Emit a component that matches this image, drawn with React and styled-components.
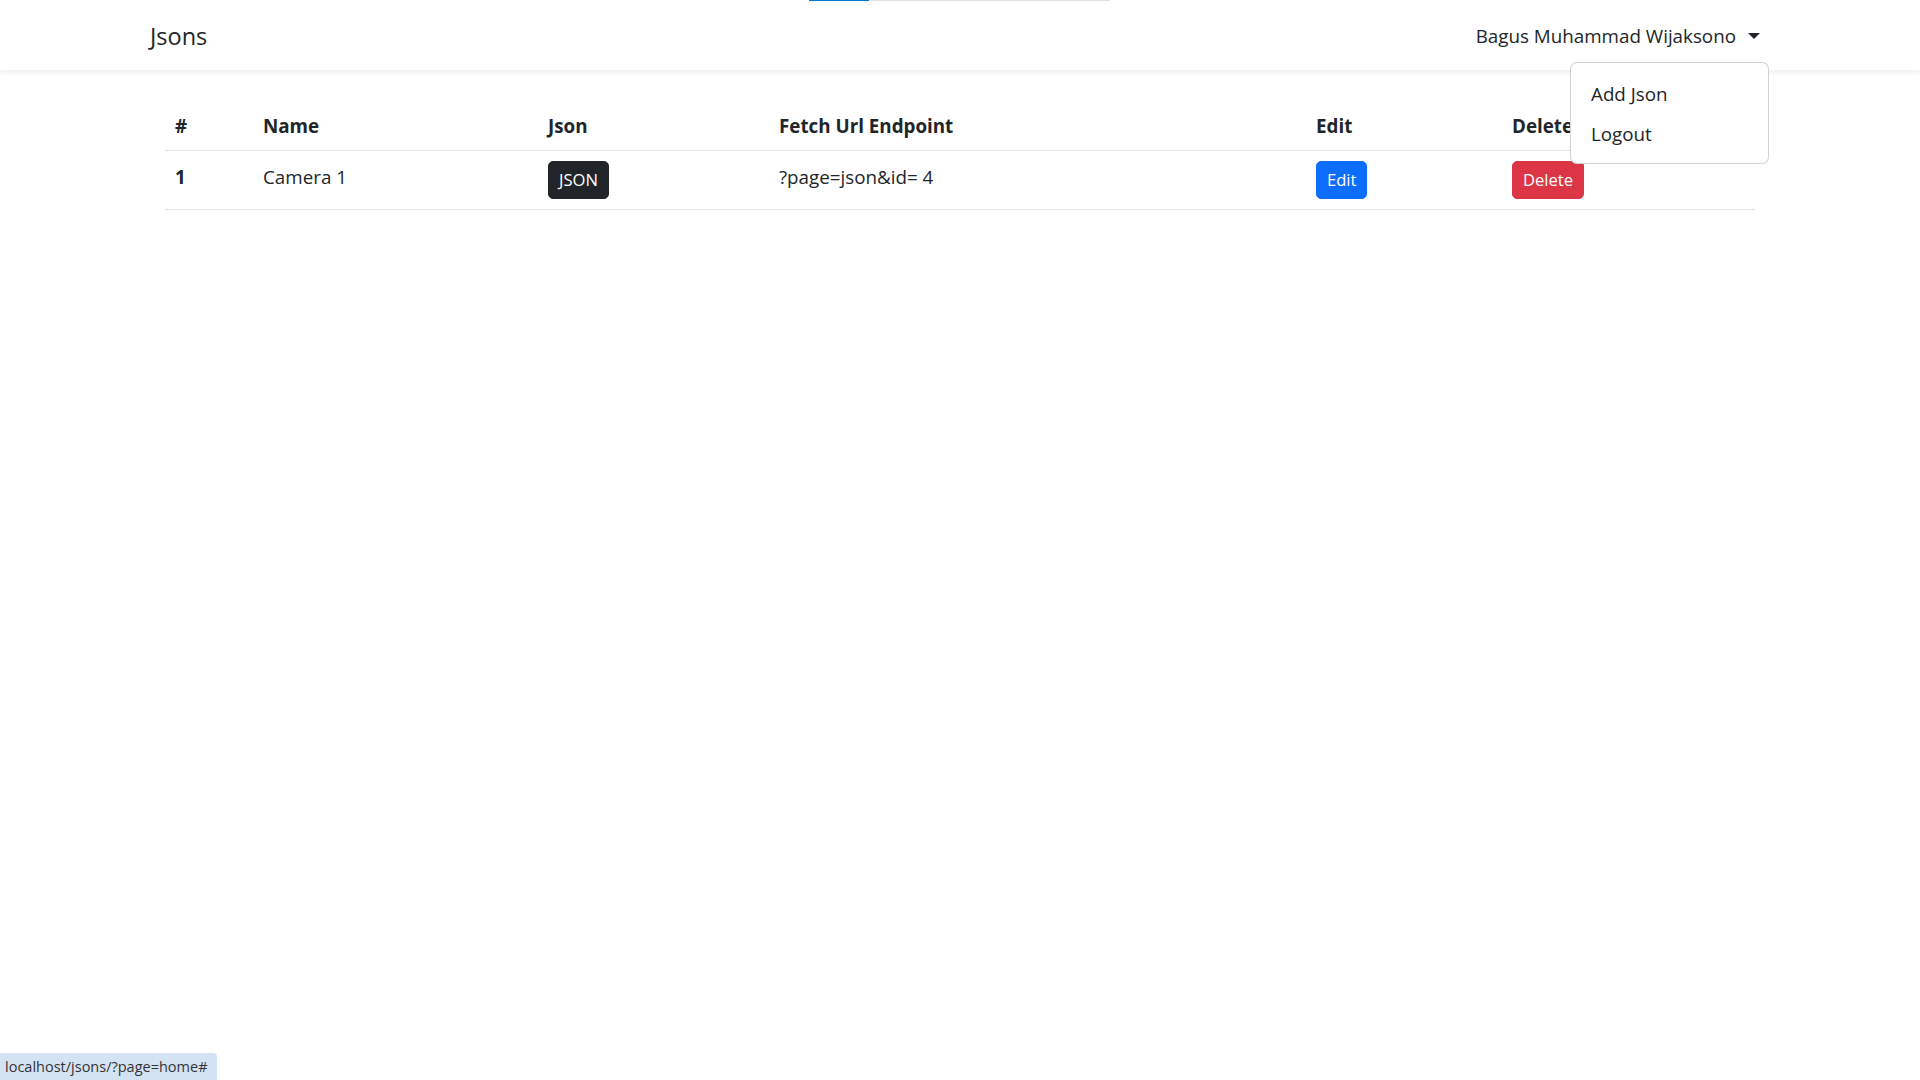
import React from "react";
import styled, { createGlobalStyle } from "styled-components";

const GlobalStyle = createGlobalStyle`
  html, body {
    margin: 0;
    padding: 0;
    background: #fff;
  }
  body {
    font-family: "Segoe UI", "Open Sans", "Noto Sans", sans-serif;
    font-size: 18.8px;
    line-height: 30px;
    color: #212529;
  }
  * {
    box-sizing: border-box;
  }
`;

// Navbar
const Navbar = styled.nav`
  height: 70px;
  padding: 10px 150px;
  display: flex;
  align-items: center;
  justify-content: space-between;
  background: #fff;
  box-shadow: 0 2px 6px rgba(0, 0, 0, 0.075);
  position: relative;
  z-index: 2;
`;

const Brand = styled.a`
  font-size: 23.5px;
  line-height: 37px;
  padding-top: 2px;
  color: #212529;
  text-decoration: none;
`;

const NavItem = styled.div`
  position: relative;
`;

const NavLink = styled.a`
  display: flex;
  align-items: center;
  padding: 11px 10px 9px;
  line-height: 30px;
  color: #212529;
  text-decoration: none;

  &::after {
    content: "";
    display: inline-block;
    margin-left: 12px;
    border-top: 6px solid #212529;
    border-left: 6px solid transparent;
    border-right: 6px solid transparent;
  }
`;

const Menu = styled.div`
  position: absolute;
  right: 1px;
  top: calc(100% + 2px);
  width: 199px;
  padding: 10px 0;
  background: #fff;
  border: 1px solid rgba(0, 0, 0, 0.175);
  border-radius: 7px;
`;

const MenuItem = styled.a`
  display: block;
  padding: 6px 20px 4px;
  line-height: 30px;
  color: #212529;
  text-decoration: none;
`;

// Table
const Main = styled.main`
  padding: 30px 165px 0;
`;

const Table = styled.table`
  width: 100%;
  border-collapse: collapse;
  table-layout: fixed;
`;

const Th = styled.th`
  width: ${(p) => p.$w}px;
  text-align: left;
  font-weight: 700;
  padding: 11px 10px 9px;
  border-bottom: 1px solid #dee2e6;
  vertical-align: bottom;
`;

const Td = styled.td`
  padding: 10px;
  border-bottom: 1px solid #dee2e6;
  vertical-align: top;
  font-weight: ${(p) => (p.$bold ? 700 : 400)};
`;

const CellText = styled.span`
  display: block;
  padding-top: 1px;
`;

const colors = {
  dark: "#212529",
  primary: "#0d6efd",
  danger: "#dc3545",
};

const Button = styled.button`
  font-family: inherit;
  font-size: 16.6px;
  line-height: 26px;
  padding: 5px 10px;
  color: #fff;
  background: ${(p) => colors[p.$variant]};
  border: 1px solid ${(p) => colors[p.$variant]};
  border-radius: 5px;
  cursor: pointer;
`;

// Browser overlays
const Progress = styled.div`
  position: fixed;
  top: 0;
  left: 809px;
  width: 301px;
  height: 1px;
  background: #e3e3e3;
  z-index: 10;

  &::before {
    content: "";
    display: block;
    width: 60px;
    height: 100%;
    background: #0078d4;
  }
`;

const StatusBubble = styled.div`
  position: fixed;
  left: 0;
  bottom: 0;
  width: 217px;
  height: 27px;
  padding: 0 0 0 5px;
  background: #d3e3f4;
  border-top-right-radius: 4px;
  font-size: 14.5px;
  line-height: 27px;
  color: #333;
  white-space: nowrap;
  overflow: hidden;
  z-index: 10;
`;

const cols = [
  { label: "#", w: 88 },
  { label: "Name", w: 285 },
  { label: "Json", w: 231 },
  { label: "Fetch Url Endpoint", w: 537 },
  { label: "Edit", w: 196 },
  { label: "Delete", w: 253 },
];

const rows = [{ id: 1, name: "Camera 1", endpoint: "?page=json&id= 4" }];

export default function App() {
  return (
    <>
      <GlobalStyle />
      <Progress />
      <Navbar>
        <Brand href="#">Jsons</Brand>
        <NavItem>
          <NavLink href="#">Bagus Muhammad Wijaksono</NavLink>
          <Menu>
            <MenuItem href="#">Add Json</MenuItem>
            <MenuItem href="#">Logout</MenuItem>
          </Menu>
        </NavItem>
      </Navbar>
      <Main>
        <Table>
          <thead>
            <tr>
              {cols.map((c) => (
                <Th key={c.label} $w={c.w}>
                  {c.label}
                </Th>
              ))}
            </tr>
          </thead>
          <tbody>
            {rows.map((r) => (
              <tr key={r.id}>
                <Td $bold>
                  <CellText>{r.id}</CellText>
                </Td>
                <Td>
                  <CellText>{r.name}</CellText>
                </Td>
                <Td>
                  <Button $variant="dark">JSON</Button>
                </Td>
                <Td>
                  <CellText>{r.endpoint}</CellText>
                </Td>
                <Td>
                  <Button $variant="primary">Edit</Button>
                </Td>
                <Td>
                  <Button $variant="danger">Delete</Button>
                </Td>
              </tr>
            ))}
          </tbody>
        </Table>
      </Main>
      <StatusBubble>localhost/jsons/?page=home#</StatusBubble>
    </>
  );
}
